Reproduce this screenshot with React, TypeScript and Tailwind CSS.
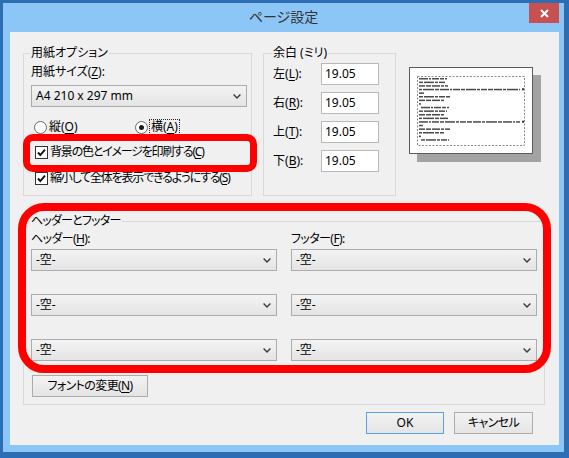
import React from "react";

function U({ children }: { children: React.ReactNode }) {
  return <span className="underline underline-offset-[2px]">{children}</span>;
}

function Chevron() {
  return (
    <svg width="8" height="5" viewBox="0 0 8 5">
      <path d="M0.6 0.6 L4 4 L7.4 0.6" fill="none" stroke="#3a3a3a" strokeWidth="1.4" />
    </svg>
  );
}

function Combo({ text }: { text: string }) {
  return (
    <div className="h-[22px] flex items-center justify-between border border-[#acacac] bg-linear-to-b from-[#f3f3f3] to-[#e4e4e4] pl-[4px] pr-[5px]">
      <span>{text}</span>
      <Chevron />
    </div>
  );
}

function Radio({ checked }: { checked?: boolean }) {
  return (
    <span className="w-[13px] h-[13px] rounded-full border border-[#6a6a6a] bg-white flex items-center justify-center shrink-0">
      {checked && <span className="w-[5px] h-[5px] rounded-full bg-[#1a1a1a]" />}
    </span>
  );
}

function Check() {
  return (
    <span className="w-[13px] h-[13px] border border-[#333] bg-white flex items-center justify-center shrink-0">
      <svg width="11" height="11" viewBox="0 0 11 11">
        <path d="M2 5.5 L4.3 8 L9 2.6" fill="none" stroke="#111" strokeWidth="1.9" />
      </svg>
    </span>
  );
}

function MarginRow({ label, k }: { label: string; k: string }) {
  return (
    <div className="flex items-center">
      <span className="w-[48px]">
        {label}(<U>{k}</U>):
      </span>
      <div className="w-[58px] h-[22px] border border-[#b9b9b9] bg-white pl-[3px] flex items-center">19.05</div>
    </div>
  );
}

const block: [number, number, boolean?][] = [
  [0, 28], [0, 26], [0, 29], [0, 101, true], [0, 5], [0, 31], [0, 25], [0, 2], [2, 28],
];
const pattern = [...block, ...block];

function Preview() {
  const segs = [9, 2, 7, 4, 10, 3, 6, 5, 8, 3, 11, 4];
  return (
    <div className="w-[124px] h-[87px] bg-white border border-[#5c5c5c] shadow-[8px_8px_0_#a3a3a3]">
      <svg width="122" height="85" viewBox="0 0 122 85">
        <rect x="7.5" y="8.5" width="107" height="69" fill="none" stroke="#8a8a8a" strokeDasharray="2 1.5" />
        {pattern.map(([ind, len, star], i) => {
          const y = 10 + i * 3.6;
          const rects: React.ReactNode[] = [];
          let x = 9 + ind;
          let j = i * 3;
          const end = 9 + ind + len;
          while (x < end) {
            const w = Math.min(segs[j % segs.length], end - x);
            rects.push(<rect key={x} x={x} y={y} width={w} height={1.5} fill="#4a4a4a" />);
            x += w + 1;
            j++;
          }
          if (star) rects.push(<rect key="s" x={112} y={y - 0.5} width={2} height={2} fill="#333" />);
          return <g key={i}>{rects}</g>;
        })}
      </svg>
    </div>
  );
}

export default function App() {
  return (
    <div className="relative w-[569px] h-[458px] bg-[#2c6db4] pt-[3px] pl-[3px] pr-[5px] pb-[6px] font-['Noto_Sans','Noto_Sans_CJK_JP',sans-serif] [font-feature-settings:'palt'] text-[12px] leading-[16px] text-black whitespace-nowrap">
      <div className="w-full h-full bg-[#8cc6f6] flex flex-col">
        <div className="h-[29px] grid grid-cols-[1fr_auto_1fr]">
          <div />
          <div className="self-center text-[14px] leading-[18px] text-[#333] pb-[1px]">ページ設定</div>
          <div className="flex justify-end items-start pr-[5px]">
            <div className="w-[30px] h-[20px] bg-[#c75050] flex items-center justify-center">
              <svg width="9" height="9" viewBox="0 0 9 9">
                <path d="M1 1 L8 8 M8 1 L1 8" stroke="white" strokeWidth="2" />
              </svg>
            </div>
          </div>
        </div>
        <div className="ml-[7px] mr-[5px] h-[413px] bg-[#f0f0f0] pt-[13px] pl-[13px] pr-[14px] flex flex-col">
          <div className="flex items-start">
            <fieldset className="w-[229px] min-w-0 border border-[#d9d9d9] px-[7px] pb-[9px] self-stretch">
              <legend className="-ml-[1px] px-[1px]">用紙オプション</legend>
              <div className="mt-[3px]">
                用紙サイズ(<U>Z</U>):
              </div>
              <div className="mt-[5px] w-[216px]">
                <Combo text="A4 210 x 297 mm" />
              </div>
              <div className="mt-[12px] flex items-center">
                <div className="w-[101px] ml-[3px] flex items-center gap-[2px]">
                  <Radio />
                  <span>
                    縦(<U>O</U>)
                  </span>
                </div>
                <div className="flex items-center gap-[1px]">
                  <Radio checked />
                  <span className="border border-dotted border-[#222] px-[1px] leading-[14px]">
                    横(<U>A</U>)
                  </span>
                </div>
              </div>
              <div className="mt-[9px] ml-[4px] flex items-center gap-[2px]">
                <Check />
                <span className="tracking-[-1.2px]">
                  背景の色とイメージを印刷する(<U>C</U>)
                </span>
              </div>
              <div className="mt-[10px] ml-[4px] flex items-center gap-[2px]">
                <Check />
                <span className="tracking-[-1.2px]">
                  縮小して全体を表示できるようにする(<U>S</U>)
                </span>
              </div>
            </fieldset>
            <fieldset className="ml-[11px] w-[133px] min-w-0 self-stretch border border-[#d9d9d9] pl-[9px] pr-[16px]">
              <legend className="-ml-[1px] px-[1px]">余白 (ミリ)</legend>
              <div className="mt-[2px] flex flex-col gap-[7px]">
                <MarginRow label="左" k="L" />
                <MarginRow label="右" k="R" />
                <MarginRow label="上" k="T" />
                <MarginRow label="下" k="B" />
              </div>
            </fieldset>
            <div className="ml-[13px] mt-[22px]">
              <Preview />
            </div>
          </div>

          <fieldset className="mt-[17px] w-full min-w-0 border border-[#d9d9d9] px-[7px] pb-[7px]">
            <legend className="-ml-[1px] px-[1px] tracking-[-0.8px]">ヘッダーとフッター</legend>
            <div className="mt-[2px] grid grid-cols-2 gap-x-[14px]">
              <div className="flex flex-col">
                <div className="tracking-[-0.6px]">
                  ヘッダー(<U>H</U>):
                </div>
                <div className="mt-[2px] flex flex-col gap-[23px]">
                  <Combo text="-空-" />
                  <Combo text="-空-" />
                  <Combo text="-空-" />
                </div>
              </div>
              <div className="flex flex-col">
                <div className="tracking-[-0.6px]">
                  フッター(<U>F</U>):
                </div>
                <div className="mt-[2px] flex flex-col gap-[23px]">
                  <Combo text="-空-" />
                  <Combo text="-空-" />
                  <Combo text="-空-" />
                </div>
              </div>
            </div>
            <button className="mt-[14px] ml-[1px] w-[116px] h-[22px] border border-[#acacac] bg-linear-to-b from-[#f3f3f3] to-[#e4e4e4] flex items-center justify-center tracking-[-0.6px]">
              フォントの変更(<U>N</U>)
            </button>
          </fieldset>

          <div className="mt-[7px] flex justify-end gap-[10px] pr-[12px]">
            <button className="w-[78px] h-[22px] border border-[#5aa0e6] bg-linear-to-b from-[#f3f3f3] to-[#e4e4e4] flex items-center justify-center">
              OK
            </button>
            <button className="w-[79px] h-[22px] border border-[#acacac] bg-linear-to-b from-[#f3f3f3] to-[#e4e4e4] flex items-center justify-center tracking-[-0.6px]">
              キャンセル
            </button>
          </div>
        </div>
      </div>

      <div className="absolute left-[23px] top-[134px] w-[234px] h-[38px] border-[7px] border-[#ff0000] rounded-[10px]" />
      <div className="absolute left-[18px] top-[203px] w-[533px] h-[170px] border-[8px] border-[#ff0000] rounded-[26px]" />
    </div>
  );
}
